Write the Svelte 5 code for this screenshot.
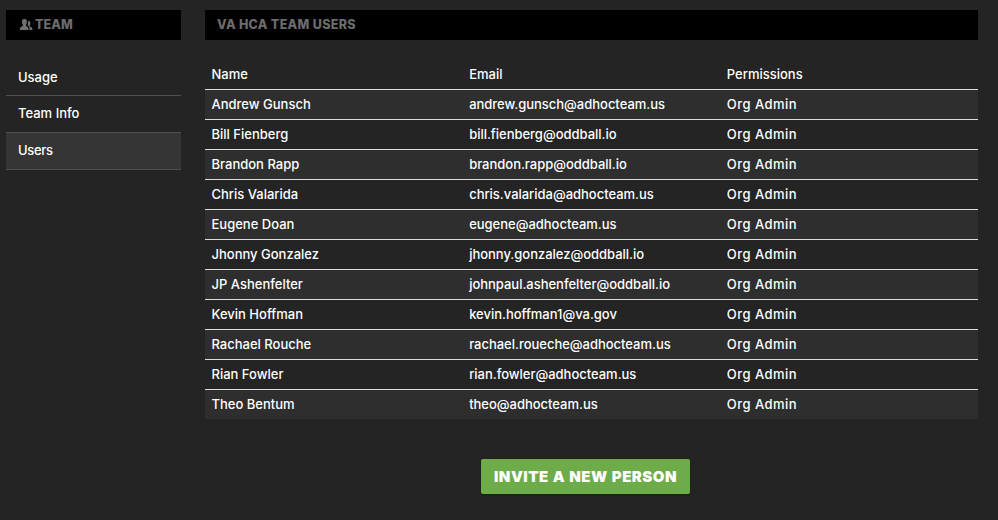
<script>
  const links = ['Usage', 'Team Info', 'Users'];
  const active = 'Users';
  const users = [
    ['Andrew Gunsch', 'andrew.gunsch@adhocteam.us'],
    ['Bill Fienberg', 'bill.fienberg@oddball.io'],
    ['Brandon Rapp', 'brandon.rapp@oddball.io'],
    ['Chris Valarida', 'chris.valarida@adhocteam.us'],
    ['Eugene Doan', 'eugene@adhocteam.us'],
    ['Jhonny Gonzalez', 'jhonny.gonzalez@oddball.io'],
    ['JP Ashenfelter', 'johnpaul.ashenfelter@oddball.io'],
    ['Kevin Hoffman', 'kevin.hoffman1@va.gov'],
    ['Rachael Rouche', 'rachael.roueche@adhocteam.us'],
    ['Rian Fowler', 'rian.fowler@adhocteam.us'],
    ['Theo Bentum', 'theo@adhocteam.us'],
  ];
</script>

<div class="page">
  <aside>
    <h2 class="team">
      <svg width="13" height="11" viewBox="0 0 13 11" aria-hidden="true">
        <path d="M4.4 0C6.2 0 7.1 1.1 6.9 2.9C6.8 4.1 6.5 4.8 6 5.5V7L7.4 7.7C8.2 8.1 8.5 9 8.5 11H0C0 9 .2 8.1 1 7.7L2.8 7V5.5C2.3 4.8 2 4.1 1.9 2.9C1.7 1.1 2.6 0 4.4 0Z" />
        <path d="M8 2.2C9.7 1.8 10.6 2.9 10.4 4.5C10.3 5.4 10.1 6 9.7 6.5V7.6L11.5 8.3C12.2 8.7 12.4 9.3 12.4 11H9.5C9.5 8.8 9.2 7.7 8.3 7.1L7.6 6.7C8 5.4 8.3 3.8 8 2.2Z" />
      </svg>
      <span>TEAM</span>
    </h2>
    <nav>
      {#each links as link}
        <a href="#{link}" class:active={link === active}>{link}</a>
      {/each}
    </nav>
  </aside>
  <main>
    <h2><span>VA HCA TEAM USERS</span></h2>
    <table>
      <thead>
        <tr><th>Name</th><th>Email</th><th>Permissions</th></tr>
      </thead>
      <tbody>
        {#each users as [name, email]}
          <tr><td>{name}</td><td class="email">{email}</td><td class="role">Org Admin</td></tr>
        {/each}
      </tbody>
    </table>
    <button type="button">INVITE A NEW PERSON</button>
  </main>
</div>

<style>
  :global(body) {
    background: #242424;
  }
  .page {
    box-sizing: border-box;
    width: 998px;
    height: 520px;
    padding: 10px 20px 0 6px;
    display: flex;
    gap: 24px;
    overflow: hidden;
    background: #242424;
    color: #fff;
    font: 500 13px/20px Inter, "Open Sans", sans-serif;
  }
  aside {
    width: 175px;
    flex: none;
  }
  main {
    flex: 1;
    display: flex;
    flex-direction: column;
  }
  h2 {
    margin: 0;
    height: 30px;
    padding-left: 12px;
    display: flex;
    align-items: center;
    background: #000;
    color: #6c6c6c;
    font-size: 12.5px;
    font-weight: 800;
    line-height: 30px;
    letter-spacing: 0.33px;
  }
  .team {
    padding-left: 14px;
    gap: 2px;
    box-sizing: border-box;
    letter-spacing: 0.1px;
  }
  svg {
    fill: #707070;
    margin-bottom: 1px;
  }
  nav {
    margin-top: 19px;
    display: flex;
    flex-direction: column;
  }
  a {
    height: 36px;
    border-bottom: 1px solid #505050;
    padding-left: 12px;
    line-height: 36px;
    color: inherit;
    text-decoration: none;
  }
  a + a {
    line-height: 35px;
  }
  .active {
    background: #353535;
    letter-spacing: -0.3px;
  }
  table {
    width: 100%;
    margin-top: 20px;
    table-layout: fixed;
    border-collapse: separate;
    border-spacing: 0;
  }
  th,
  td {
    box-sizing: border-box;
    height: 30px;
    padding: 0 0 0 6.5px;
    border-bottom: 1px solid #ddd;
    text-align: left;
    font-weight: 500;
    line-height: 29px;
    white-space: nowrap;
  }
  .email {
    letter-spacing: -0.02px;
  }
  .role {
    letter-spacing: 0.45px;
  }
  tbody tr:nth-child(odd) {
    background: #2e2e2e;
  }
  tbody tr:last-child td {
    height: 29px;
    border-bottom: 0;
  }
  button {
    align-self: center;
    width: 209px;
    height: 35px;
    margin: 40px 12px 0 0;
    padding: 0;
    border: 0;
    border-radius: 2px;
    background: #6eab49;
    color: #fff;
    font: 900 15px/35px Inter, sans-serif;
    letter-spacing: 0.5px;
    word-spacing: 0.6px;
    white-space: nowrap;
    box-shadow: 0 1px 3px rgba(0, 0, 0, 0.2);
  }
</style>
